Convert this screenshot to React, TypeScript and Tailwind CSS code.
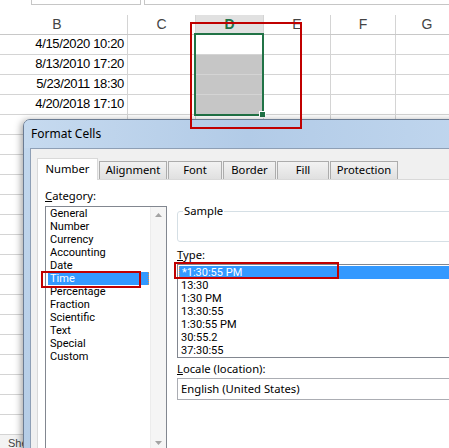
import React from "react";

const colW = ["w-[128px]", "w-[68px]", "w-[68px]", "w-[67px]", "w-[65px]", "w-[63px]"];
const heads = ["B", "C", "D", "E", "F", "G"];
const dates = ["4/15/2020 10:20", "8/13/2010 17:20", "5/23/2011 18:30", "4/20/2018 17:10"];
const categories = [
  "General",
  "Number",
  "Currency",
  "Accounting",
  "Date",
  "Time",
  "Percentage",
  "Fraction",
  "Scientific",
  "Text",
  "Special",
  "Custom",
];
const types = ["*1:30:55 PM", "13:30", "1:30 PM", "13:30:55", "1:30:55 PM", "30:55.2", "37:30:55"];
const tabs = [
  { name: "Alignment", w: "w-[68px]" },
  { name: "Font", w: "w-[54px]" },
  { name: "Border", w: "w-[53px]" },
  { name: "Fill", w: "w-[52px]" },
  { name: "Protection", w: "w-[68px]" },
];

const Arrow = ({ down }: { down?: boolean }) => (
  <svg width="7" height="4" viewBox="0 0 7 4">
    <polygon points={down ? "0,0 7,0 3.5,4" : "0,4 7,4 3.5,0"} fill="#a3a3a3" />
  </svg>
);

const Sheet = () => {
  const rows = [...dates, ...Array(16).fill("")];
  return (
    <div className="font-['Liberation_Sans',sans-serif]">
      <div className="flex h-[15px]">
        <div className="ml-[31px] w-[110px] h-[5px] border-x border-b border-[#c6c6c6]" />
        <div className="ml-[3px] flex-1 h-[5px] border-l border-b border-[#c6c6c6]" />
      </div>
      <div className="flex h-[20px] border-b border-[#c8c8c8] text-[14px] text-[#444]">
        {heads.map((h, i) => (
          <div
            key={h}
            className={`${colW[i]} shrink-0 flex items-center justify-center border-r border-[#d4d4d4] ${
              i === 0 ? "pr-[13px]" : ""
            } ${i === 2 ? "bg-[#e1e1e1] text-[#217346] font-bold" : ""}`}
          >
            {h}
          </div>
        ))}
      </div>
      {rows.map((d, r) => (
        <div key={r} className="flex h-[20px] border-b border-[#d4d4d4]">
          {colW.map((w, i) => (
            <div
              key={i}
              className={`${w} shrink-0 border-r border-[#d4d4d4] ${
                i === 2 && r >= 1 && r <= 3 ? "bg-[#c6c6c6]" : ""
              } ${i === 0 ? "flex items-end justify-end pr-[3px] pb-[1px] text-[13px] tracking-[-0.35px] text-black" : ""}`}
            >
              {i === 0 ? d : null}
            </div>
          ))}
        </div>
      ))}
      <div className="h-[14px] bg-[#f3f3f3] pl-[8px] pt-[2px] text-[11px] leading-[12px] text-[#444]">Sheet1</div>
    </div>
  );
};

const Dialog = () => (
  <div className="absolute left-[23px] top-[119px] w-[450px] h-[340px] rounded-tl-[7px] border border-[#6b7c93] bg-gradient-to-b from-[#c3d8ee] to-[#b4cce6] shadow-[-2px_1px_7px_rgba(0,0,0,0.35)] overflow-hidden flex flex-col font-['Noto_Sans',sans-serif] text-[11.25px] text-black">
    <div className="h-[28px] shrink-0 flex items-center pl-[7px] text-[12px] bg-gradient-to-r from-[#c6daef] via-[#b2cbe7] to-[#c0d6ee]">
      Format Cells
    </div>
    <div className="flex-1 pl-[6px] flex">
      <div className="flex-1 bg-[#f0f0f0] border-l border-t border-[#8e9fb5] pl-[6px] pt-[8px] flex flex-col">
        <div className="flex items-end h-[22px]">
          <div className="w-[61px] h-[22px] -mb-px relative z-10 bg-white border border-b-0 border-[#d9d9d9] flex items-center justify-center">
            Number
          </div>
          {tabs.map((t) => (
            <div
              key={t.name}
              className={`${t.w} h-[18px] ml-px border border-b-0 border-[#acacac] bg-gradient-to-b from-[#f2f2f2] to-[#e0e0e0] flex items-center justify-center`}
            >
              {t.name}
            </div>
          ))}
        </div>
        <div className="flex-1 bg-white border-t border-l border-[#d9d9d9] pl-[7px] flex">
          <div className="w-[122px] shrink-0">
            <div className="mt-[9px] leading-[13px]">
              <span className="underline">C</span>ategory:
            </div>
            <div className="mt-[4px] h-[246px] border border-[#828790] flex">
              <div className="flex-1 pl-[2px] pr-[1px] leading-[13px] font-['Roboto',sans-serif] text-[11px]">
                {categories.map((c) => (
                  <div
                    key={c}
                    className={
                      c === "Time"
                        ? "h-[13px] px-[2px] bg-[#3399ff] text-white border-r border-dotted border-[#d39157]"
                        : "h-[13px] px-[2px]"
                    }
                  >
                    {c}
                  </div>
                ))}
              </div>
              <div className="w-[16px] bg-[#f5f5f5] border-l border-[#ececec] flex flex-col justify-between items-center py-[6px]">
                <Arrow />
                <Arrow down />
              </div>
            </div>
          </div>
          <div className="ml-[10px] flex-1 pr-[4px]">
            <div className="mt-[31px] h-[31px] rounded-[3px] border border-[#d5dfe5]">
              <span className="inline-block -mt-[8px] ml-[5px] px-[1px] bg-white leading-[13px] align-top">
                Sample
              </span>
            </div>
            <div className="mt-[6px] leading-[13px]">
              <span className="underline">T</span>ype:
            </div>
            <div className="mt-[3px] h-[94px] border border-[#828790] pl-[1px] pt-[1px] leading-[13px] font-['Roboto',sans-serif] text-[11px]">
              {types.map((t, i) => (
                <div
                  key={t}
                  className={
                    i === 0
                      ? "h-[13px] px-[2px] bg-[#3399ff] text-white border-l border-dotted border-[#d39157]"
                      : "h-[13px] px-[2px]"
                  }
                >
                  {t}
                </div>
              ))}
            </div>
            <div className="mt-[4px] leading-[13px]">
              <span className="underline">L</span>ocale (location):
            </div>
            <div className="mt-[3px] h-[22px] border border-[#abadb3] flex items-center pl-[3px]">
              English (United States)
            </div>
          </div>
        </div>
      </div>
    </div>
  </div>
);

export default function App() {
  return (
    <div className="relative w-[449px] h-[448px] overflow-hidden bg-white">
      <Sheet />
      <div className="absolute left-[194px] top-[33px] w-[70px] h-[83px] border-2 border-[#217346]" />
      <div className="absolute left-[259px] top-[111px] w-[7px] h-[7px] bg-[#217346] border border-white" />
      <Dialog />
      <div className="absolute left-[190px] top-[22px] w-[112px] h-[107px] border-2 border-[#c00000]" />
      <div className="absolute left-[41px] top-[271px] w-[100px] h-[17px] border-2 border-[#c00000]" />
      <div className="absolute left-[174px] top-[262px] w-[165px] h-[17px] border-2 border-[#c00000]" />
    </div>
  );
}
